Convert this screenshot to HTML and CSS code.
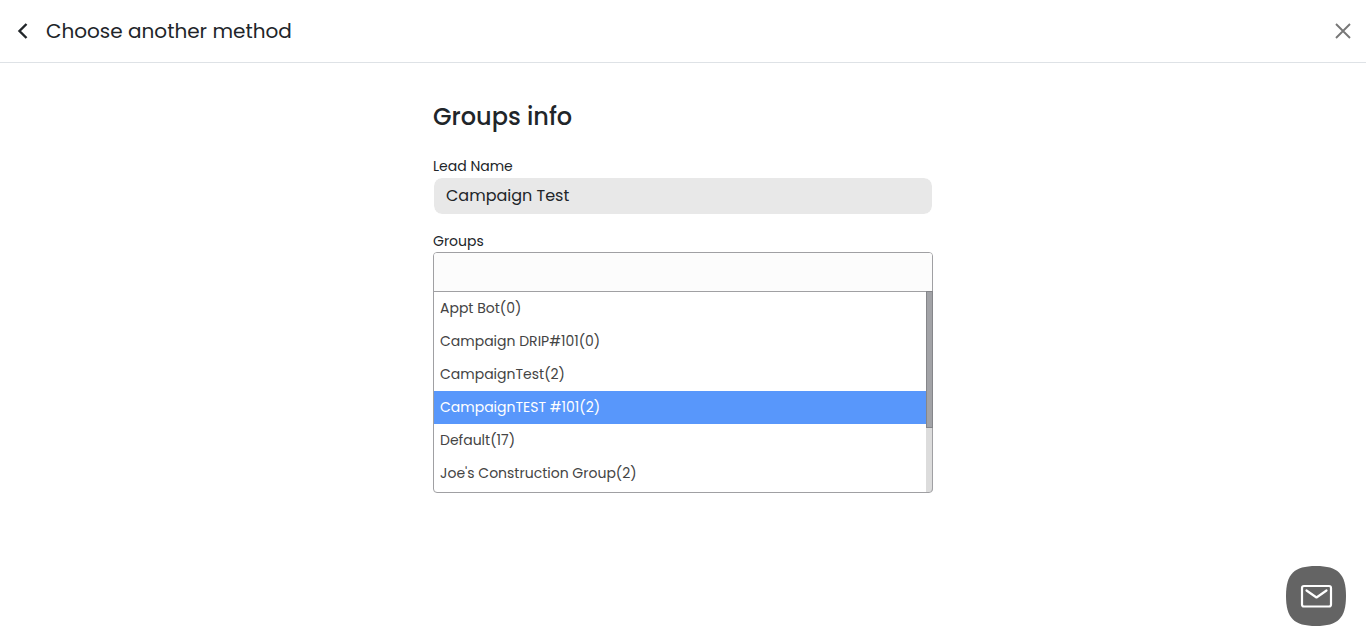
FILE: index.html
```
<!DOCTYPE html>
<html lang="en">
<head>
  <meta charset="UTF-8">
  <meta name="viewport" content="width=device-width, initial-scale=1.0">
  <title>Groups info</title>
  <link rel="stylesheet" href="styles.css">
</head>
<body>
  <header class="topbar">
    <a href="#" class="back">
      <svg width="12" height="18" viewBox="0 0 12 18" fill="none" stroke="currentColor" stroke-width="2.4" aria-hidden="true">
        <path d="M9.500 2 2.500 9l7 7"/>
      </svg>
      <span>Choose another method</span>
    </a>
    <button type="button" class="close" aria-label="Close">
      <svg width="16" height="16" viewBox="0 0 16 16" stroke="currentColor" stroke-width="1.9" aria-hidden="true">
        <path d="M1 1l14 14M15 1 1 15"/>
      </svg>
    </button>
  </header>

  <main class="panel">
    <h1>Groups info</h1>
    <form>
      <div class="field">
        <label for="leadName">Lead Name</label>
        <input type="text" id="leadName" class="lead-name" value="Campaign Test" readonly>
      </div>
      <div class="field">
        <label for="groups">Groups</label>
        <div class="select">
          <input type="text" id="groups" class="select-search" role="combobox" aria-expanded="true" aria-controls="groupList" autocomplete="off">
          <ul id="groupList" class="select-list" role="listbox">
            <li role="option">Appt Bot(0)</li>
            <li role="option">Campaign DRIP#101(0)</li>
            <li role="option">CampaignTest(2)</li>
            <li role="option" class="active" aria-selected="true">CampaignTEST #101(2)</li>
            <li role="option">Default(17)</li>
            <li role="option">Joe's Construction Group(2)</li>
          </ul>
          <div class="scroll-track"><div class="scroll-thumb"></div></div>
        </div>
      </div>
    </form>
  </main>

  <button type="button" class="mail" aria-label="Messages">
    <svg width="60" height="60" viewBox="0 0 60 60" aria-hidden="true">
      <path fill="#646464" d="M30 0C52 0 60 8 60 30S52 60 30 60 0 52 0 30 8 0 30 0Z"/>
      <g fill="none" stroke="#fff" stroke-width="2.2" stroke-linecap="round" stroke-linejoin="round">
        <rect x="16" y="20" width="29" height="20.500" rx="2"/>
        <path d="M20.500 24.500 30.500 31.500 40.500 24.500"/>
      </g>
    </svg>
  </button>
</body>
</html>
```

FILE: styles.css
```
:root {
  --text: #212529;
  --border: #a0a0a3;
  --active: #5897fb;
}
* { box-sizing: border-box; margin: 0; padding: 0; }
body {
  font-family: Poppins, Inter, sans-serif;
  font-size: 14px;
  color: var(--text);
  background: #fff;
}
button {
  border: none;
  background: none;
  cursor: pointer;
}
svg { display: block; }

.topbar {
  display: flex;
  align-items: center;
  justify-content: space-between;
  height: 63px;
  padding: 0 15px 0 17px;
  border-bottom: 1px solid #dee2e6;
}
.back {
  display: flex;
  align-items: center;
  gap: 17px;
  font-size: 20px;
  line-height: 30px;
  color: var(--text);
  text-decoration: none;
}
.close { color: #777; }

.panel {
  width: 100%;
  max-width: 500px;
  margin: 0 auto;
  padding-top: 38px;
}
.panel h1 {
  font-size: 24px;
  font-weight: 500;
  line-height: 32px;
  margin-bottom: 23px;
}
.field { margin-bottom: 16px; }
.field label {
  display: block;
  line-height: 21px;
}
.lead-name {
  display: block;
  width: 100%;
  height: 38px;
  padding: 0 12px 2px;
  border: 1px solid #fff;
  border-radius: 9px;
  background: #e8e8e8;
  background-clip: padding-box;
  font: inherit;
  font-size: 16px;
  color: var(--text);
}

/* open dropdown */
.select {
  position: relative;
  border: 1px solid var(--border);
  border-radius: 4px;
}
.select-search {
  display: block;
  width: 100%;
  height: 39px;
  padding: 0 6px;
  border: none;
  border-bottom: 1px solid var(--border);
  border-radius: 3px 3px 0 0;
  background: #fcfcfc;
  font: inherit;
}
.select-list {
  height: 200px;
  overflow: hidden;
  list-style: none;
}
.select-list li {
  height: 33px;
  padding: 0 6px;
  line-height: 33px;
  color: #444;
}
.select-list .active {
  background: var(--active);
  color: #fff;
}
.scroll-track {
  position: absolute;
  top: 38px;
  right: -1px;
  bottom: 0;
  width: 7px;
  border-right: 1px solid var(--border);
  border-radius: 0 0 4px 0;
  background: #dcdcdc;
}
.scroll-thumb {
  width: 7px;
  height: 137px;
  border: 1px solid #85868a;
  background: #a2a3a7;
}

.mail {
  position: fixed;
  right: 20px;
  bottom: 15px;
}
```
